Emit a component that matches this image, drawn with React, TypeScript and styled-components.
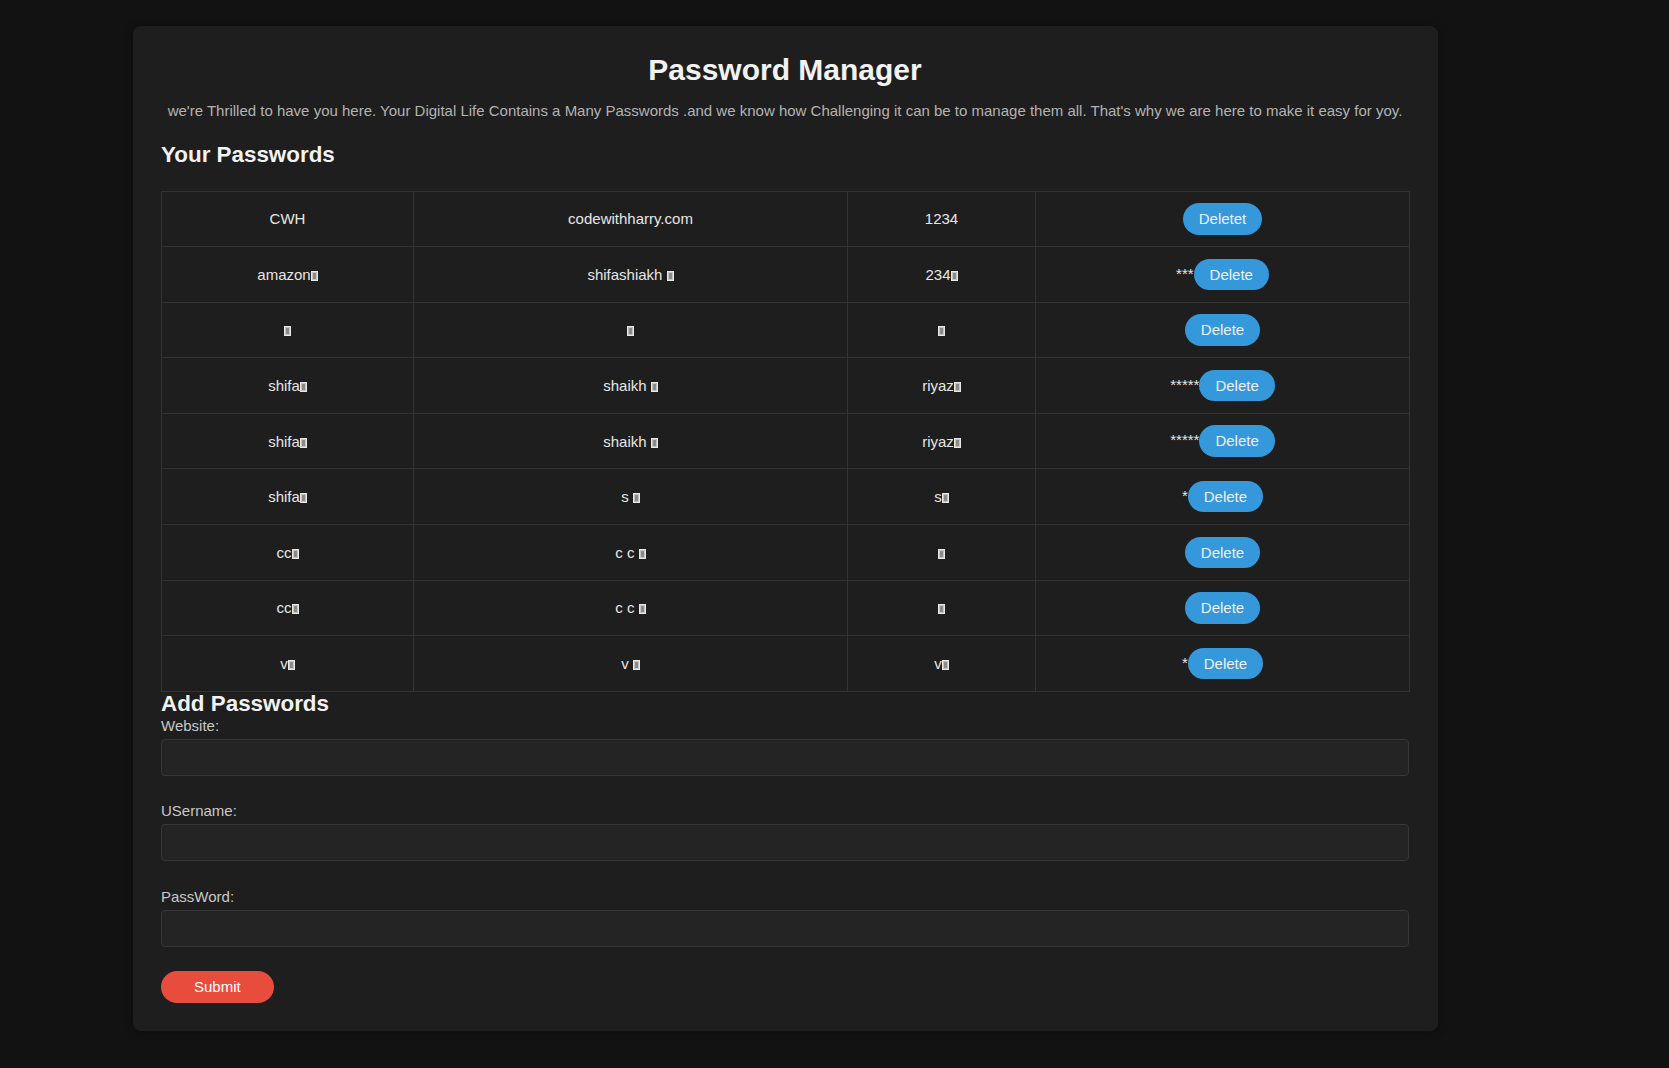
import React from "react";
import styled, { createGlobalStyle } from "styled-components";

const GlobalStyle = createGlobalStyle`
  html, body {
    margin: 0;
    padding: 0;
    background: #121212;
    font-family: "Liberation Sans", Arial, Helvetica, sans-serif;
    font-size: 15px;
    color: #e0e0e0;
  }
  * { box-sizing: border-box; }
`;

const Page = styled.div`
  padding: 26px 0 36px 133px;
`;

const Container = styled.main`
  width: 1305px;
  background: #1e1e1e;
  border-radius: 8px;
  padding: 26px 29px 28px 28px;
  box-shadow: 0 0 10px rgba(0, 0, 0, 0.35);
`;

const Title = styled.h1`
  margin: 0;
  font-size: 30px;
  line-height: 35px;
  font-weight: bold;
  text-align: center;
  color: #f2f2f2;
`;

const Intro = styled.p`
  margin: 15px 0 0;
  font-size: 15px;
  line-height: 17px;
  text-align: center;
  color: #b3b3b3;
`;

const SectionTitle = styled.h2<{ $top: number; $bottom: number }>`
  margin: ${(p) => p.$top}px 0 ${(p) => p.$bottom}px;
  font-size: 22.4px;
  line-height: 26px;
  font-weight: bold;
  color: #f2f2f2;
`;

const Table = styled.table`
  width: 1248px;
  border-collapse: collapse;
  table-layout: fixed;
`;

const Row = styled.tr`
  height: 55.6px;
`;

const Cell = styled.td`
  border: 1px solid #333333;
  padding: 0 12px;
  text-align: center;
  vertical-align: middle;
  color: #e6e6e6;
  font-size: 15px;
  line-height: 17px;
  white-space: nowrap;
`;

const Tofu = styled.span`
  display: inline-block;
  width: 7px;
  height: 10px;
  border: 1px solid #e8e8e8;
  background: #8a8a8a;
  box-shadow: inset 0 0 0 1px #c4c4c4;
  vertical-align: -1px;
`;

const Stars = styled.span`
  color: #e6e6e6;
`;

const DeleteButton = styled.button`
  font-family: inherit;
  font-size: 15px;
  line-height: 17.4px;
  padding: 7px 16px;
  border: none;
  border-radius: 20px;
  background: #3498db;
  color: #f0f0f0;
  cursor: pointer;
  vertical-align: middle;
`;

const Form = styled.form`
  display: flex;
  flex-direction: column;
`;

const Label = styled.label`
  display: block;
  font-size: 15px;
  line-height: 17px;
  color: #c8c8c8;
  margin-bottom: 5px;
`;

const Input = styled.input`
  display: block;
  width: 100%;
  height: 37px;
  margin-bottom: 26.5px;
  background: #242424;
  border: 1px solid #363636;
  border-radius: 4px;
  color: #e6e6e6;
  font-family: inherit;
  font-size: 15px;
  padding: 0 10px;
  outline: none;
  &:last-of-type {
    margin-bottom: 0;
  }
`;

const SubmitButton = styled.button`
  align-self: flex-start;
  margin-top: 24px;
  font-family: inherit;
  font-size: 15px;
  line-height: 17.7px;
  padding: 7px 33px;
  border: none;
  border-radius: 20px;
  background: #e74c3c;
  color: #ffffff;
  cursor: pointer;
`;

type Entry = {
  site: string;
  user: string;
  pass: string;
  stars: string;
  label: string;
};

// "§" marks a character that the browser drew as a missing-glyph box
const entries: Entry[] = [
  { site: "CWH", user: "codewithharry.com", pass: "1234", stars: "", label: "Deletet" },
  { site: "amazon§", user: "shifashiakh §", pass: "234§", stars: "***", label: "Delete" },
  { site: "§", user: "§", pass: "§", stars: "", label: "Delete" },
  { site: "shifa§", user: "shaikh §", pass: "riyaz§", stars: "*****", label: "Delete" },
  { site: "shifa§", user: "shaikh §", pass: "riyaz§", stars: "*****", label: "Delete" },
  { site: "shifa§", user: "s §", pass: "s§", stars: "*", label: "Delete" },
  { site: "cc§", user: "c c §", pass: "§", stars: "", label: "Delete" },
  { site: "cc§", user: "c c §", pass: "§", stars: "", label: "Delete" },
  { site: "v§", user: "v §", pass: "v§", stars: "*", label: "Delete" },
];

function renderValue(value: string) {
  const parts = value.split("§");
  return parts.map((part, i) => (
    <React.Fragment key={i}>
      {part}
      {i < parts.length - 1 && <Tofu />}
    </React.Fragment>
  ));
}

export default function App() {
  return (
    <>
      <GlobalStyle />
      <Page>
        <Container>
          <Title>Password Manager</Title>
          <Intro>
            we're Thrilled to have you here. Your Digital Life Contains a Many Passwords .and we know how
            Challenging it can be to manage them all. That's why we are here to make it easy for yoy.
          </Intro>
          <SectionTitle $top={22.5} $bottom={23}>Your Passwords</SectionTitle>
          <Table>
            <colgroup>
              <col style={{ width: 252 }} />
              <col style={{ width: 434 }} />
              <col style={{ width: 188 }} />
              <col style={{ width: 374 }} />
            </colgroup>
            <tbody>
              {entries.map((e, i) => (
                <Row key={i}>
                  <Cell>{renderValue(e.site)}</Cell>
                  <Cell>{renderValue(e.user)}</Cell>
                  <Cell>{renderValue(e.pass)}</Cell>
                  <Cell>
                    {e.stars && <Stars>{e.stars}</Stars>}
                    <DeleteButton type="button">{e.label}</DeleteButton>
                  </Cell>
                </Row>
              ))}
            </tbody>
          </Table>
          <SectionTitle $top={-1} $bottom={0}>Add Passwords</SectionTitle>
          <Form onSubmit={(ev) => ev.preventDefault()}>
            <Label htmlFor="website">Website:</Label>
            <Input id="website" type="text" />
            <Label htmlFor="username">USername:</Label>
            <Input id="username" type="text" />
            <Label htmlFor="password">PassWord:</Label>
            <Input id="password" type="password" />
            <SubmitButton type="submit">Submit</SubmitButton>
          </Form>
        </Container>
      </Page>
    </>
  );
}
